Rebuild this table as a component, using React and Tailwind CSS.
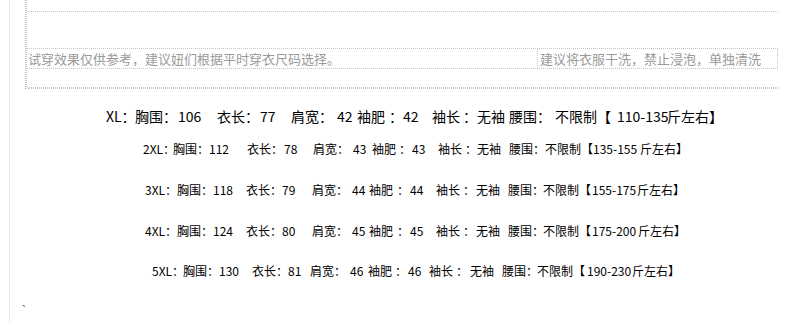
export default function App() {
  const font = { fontFamily: '"Noto Sans CJK SC", "Noto Sans", sans-serif' };
  return (
    <div
      className="w-[793px] h-[323px] bg-white flex overflow-hidden text-black"
      style={font}
    >
      <div className="w-[9px] shrink-0" />
      <div className="flex-1 border-l border-[#ebebeb] flex flex-col">
        {/* dotted box */}
        <div className="pl-[15px]">
          <div className="w-[753px] border-l border-dotted border-[#c4c4c4]">
            <div className="w-full border-l border-dotted border-[#c4c4c4]">
              <div className="h-[12px] border-b border-dotted border-[#c4c4c4]" />
              <div className="h-[36px]" />
              <div className="h-[21px] flex border-t border-b border-dotted border-[#c4c4c4] text-[13px] leading-[19px] text-[#9a9a9a]">
                <div className="flex-1 pl-[1px] whitespace-nowrap">
                  试穿效果仅供参考，建议妞们根据平时穿衣尺码选择。
                </div>
                <div className="w-[241px] shrink-0 border-l border-r border-dotted border-[#c4c4c4] pl-[2px] whitespace-nowrap">
                  建议将衣服干洗，禁止浸泡，单独清洗
                </div>
              </div>
              <div className="h-[19px] border-b border-dotted border-[#c4c4c4]" />
              <div className="h-[1px] ml-[1px] border-b border-dotted border-[#c4c4c4]" />
            </div>
          </div>
        </div>

        {/* XL */}
        <div className="mt-[17px] h-[20px] leading-[20px] text-[14px] flex pl-[96px] whitespace-nowrap">
          <span className="w-[29px] shrink-0">XL：</span>
          <span className="w-[43px] shrink-0">胸围：</span>
          <span className="w-[39px] shrink-0">106</span>
          <span className="w-[43px] shrink-0">衣长：</span>
          <span className="w-[31px] shrink-0">77</span>
          <span className="w-[46px] shrink-0">肩宽：</span>
          <span className="w-[20px] shrink-0">42</span>
          <span className="w-[32px] shrink-0">袖肥</span>
          <span className="w-[14px] shrink-0">：</span>
          <span className="w-[29px] shrink-0">42</span>
          <span className="w-[31px] shrink-0">袖长</span>
          <span className="w-[14px] shrink-0">：</span>
          <span className="w-[32px] shrink-0">无袖</span>
          <span className="w-[46px] shrink-0">腰围：</span>
          <span className="w-[42px] shrink-0">不限制</span>
          <span className="w-[20px] shrink-0">【</span>
          <span className="w-[50px] shrink-0">110-135</span>
          <span className="shrink-0">斤左右】</span>
        </div>

        {/* 2XL */}
        <div className="mt-[14px] h-[18px] leading-[18px] text-[12px] flex pl-[133px] whitespace-nowrap">
          <span className="w-[30px] shrink-0">2XL：</span>
          <span className="w-[36px] shrink-0">胸围：</span>
          <span className="w-[38px] shrink-0">112</span>
          <span className="w-[37px] shrink-0">衣长：</span>
          <span className="w-[29px] shrink-0">78</span>
          <span className="w-[40px] shrink-0">肩宽：</span>
          <span className="w-[19px] shrink-0">43</span>
          <span className="w-[27px] shrink-0">袖肥</span>
          <span className="w-[13px] shrink-0">：</span>
          <span className="w-[26px] shrink-0">43</span>
          <span className="w-[27px] shrink-0">袖长</span>
          <span className="w-[12px] shrink-0">：</span>
          <span className="w-[32px] shrink-0">无袖</span>
          <span className="w-[36px] shrink-0">腰围：</span>
          <span className="w-[36px] shrink-0">不限制</span>
          <span className="w-[12px] shrink-0">【</span>
          <span className="w-[47px] shrink-0">135-155</span>
          <span className="shrink-0">斤左右】</span>
        </div>

        {/* 3XL */}
        <div className="mt-[23px] h-[18px] leading-[18px] text-[12px] flex pl-[135px] whitespace-nowrap">
          <span className="w-[32px] shrink-0">3XL：</span>
          <span className="w-[36px] shrink-0">胸围：</span>
          <span className="w-[33px] shrink-0">118</span>
          <span className="w-[36px] shrink-0">衣长：</span>
          <span className="w-[30px] shrink-0">79</span>
          <span className="w-[40px] shrink-0">肩宽：</span>
          <span className="w-[17px] shrink-0">44</span>
          <span className="w-[28px] shrink-0">袖肥</span>
          <span className="w-[13px] shrink-0">：</span>
          <span className="w-[26px] shrink-0">44</span>
          <span className="w-[27px] shrink-0">袖长</span>
          <span className="w-[13px] shrink-0">：</span>
          <span className="w-[32px] shrink-0">无袖</span>
          <span className="w-[35px] shrink-0">腰围：</span>
          <span className="w-[36px] shrink-0">不限制</span>
          <span className="w-[13px] shrink-0">【</span>
          <span className="w-[45px] shrink-0">155-175</span>
          <span className="shrink-0">斤左右】</span>
        </div>

        {/* 4XL */}
        <div className="mt-[23px] h-[18px] leading-[18px] text-[12px] flex pl-[135px] whitespace-nowrap">
          <span className="w-[32px] shrink-0">4XL：</span>
          <span className="w-[36px] shrink-0">胸围：</span>
          <span className="w-[33px] shrink-0">124</span>
          <span className="w-[36px] shrink-0">衣长：</span>
          <span className="w-[30px] shrink-0">80</span>
          <span className="w-[40px] shrink-0">肩宽：</span>
          <span className="w-[17px] shrink-0">45</span>
          <span className="w-[28px] shrink-0">袖肥</span>
          <span className="w-[13px] shrink-0">：</span>
          <span className="w-[26px] shrink-0">45</span>
          <span className="w-[27px] shrink-0">袖长</span>
          <span className="w-[13px] shrink-0">：</span>
          <span className="w-[32px] shrink-0">无袖</span>
          <span className="w-[35px] shrink-0">腰围：</span>
          <span className="w-[36px] shrink-0">不限制</span>
          <span className="w-[13px] shrink-0">【</span>
          <span className="w-[46px] shrink-0">175-200</span>
          <span className="shrink-0">斤左右】</span>
        </div>

        {/* 5XL */}
        <div className="mt-[22px] h-[18px] leading-[18px] text-[12px] flex pl-[142px] whitespace-nowrap">
          <span className="w-[31px] shrink-0">5XL：</span>
          <span className="w-[36px] shrink-0">胸围：</span>
          <span className="w-[33px] shrink-0">130</span>
          <span className="w-[36px] shrink-0">衣长：</span>
          <span className="w-[22px] shrink-0">81</span>
          <span className="w-[40px] shrink-0">肩宽：</span>
          <span className="w-[18px] shrink-0">46</span>
          <span className="w-[27px] shrink-0">袖肥</span>
          <span className="w-[13px] shrink-0">：</span>
          <span className="w-[21px] shrink-0">46</span>
          <span className="w-[27px] shrink-0">袖长</span>
          <span className="w-[14px] shrink-0">：</span>
          <span className="w-[32px] shrink-0">无袖</span>
          <span className="w-[35px] shrink-0">腰围：</span>
          <span className="w-[36px] shrink-0">不限制</span>
          <span className="w-[14px] shrink-0">【</span>
          <span className="w-[45px] shrink-0">190-230</span>
          <span className="shrink-0">斤左右】</span>
        </div>

        <div
          className="mt-[24px] ml-[12px] h-[14px] leading-[14px] text-[12px] text-[#444]"
          style={{ fontFamily: '"Liberation Sans", sans-serif' }}
        >
          `
        </div>
      </div>
    </div>
  );
}
